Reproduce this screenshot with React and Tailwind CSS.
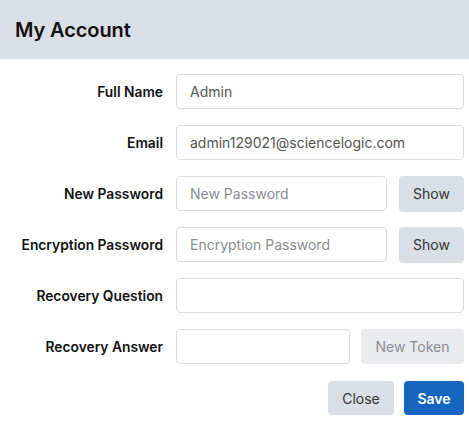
import React from "react";

export default function App() {
  return (
    <div className="w-[469px] h-[428px] bg-white font-['Inter',sans-serif] text-[#111]">
      {/* header */}
      <div className="h-[59px] bg-[#dadee6] flex items-center px-[15px]">
        <h1 className="text-[20px] font-semibold tracking-[-0.1px]">My Account</h1>
      </div>

      {/* form */}
      <div className="pt-[15px] pr-[5px]">
        <div className="grid grid-cols-[163px_1fr] gap-x-[13px] gap-y-4 items-center">
          <Label>Full Name</Label>
          <Field value="Admin" />

          <Label>Email</Label>
          <Field value="admin129021@sciencelogic.com" />

          <Label>New Password</Label>
          <div className="flex items-center gap-3 h-[35px]">
            <Field placeholder="New Password" />
            <button className="w-[65px] h-[36px] shrink-0 rounded bg-[#dadee6] text-[14px] text-[#333]">
              Show
            </button>
          </div>

          <Label>Encryption Password</Label>
          <div className="flex items-center gap-3 h-[35px]">
            <Field placeholder="Encryption Password" />
            <button className="w-[65px] h-[36px] shrink-0 rounded bg-[#dadee6] text-[14px] text-[#333]">
              Show
            </button>
          </div>

          <Label>Recovery Question</Label>
          <Field />

          <Label>Recovery Answer</Label>
          <div className="flex items-center gap-[11px] h-[35px]">
            <Field />
            <button className="w-[103px] h-[35px] shrink-0 rounded bg-[#e9ebef] text-[14px] text-[#8a8d92]">
              New Token
            </button>
          </div>
        </div>

        <div className="flex justify-end gap-[10px] mt-[17px]">
          <button className="w-[66px] h-[34px] rounded bg-[#dadee6] text-[14px] text-[#333]">Close</button>
          <button className="w-[60px] h-[34px] rounded bg-[#1565c0] text-[14px] font-semibold text-white">Save</button>
        </div>
      </div>
    </div>
  );
}

function Label({ children }) {
  return <label className="text-right text-[13.8px] font-semibold leading-5">{children}</label>;
}

function Field({ value, placeholder }) {
  return (
    <input
      defaultValue={value}
      placeholder={placeholder}
      className="w-full min-w-0 h-[35px] rounded border border-[#d9dde3] bg-white px-[13px] text-[14px] text-[#555] placeholder:text-[#8a8d92] outline-none"
    />
  );
}
